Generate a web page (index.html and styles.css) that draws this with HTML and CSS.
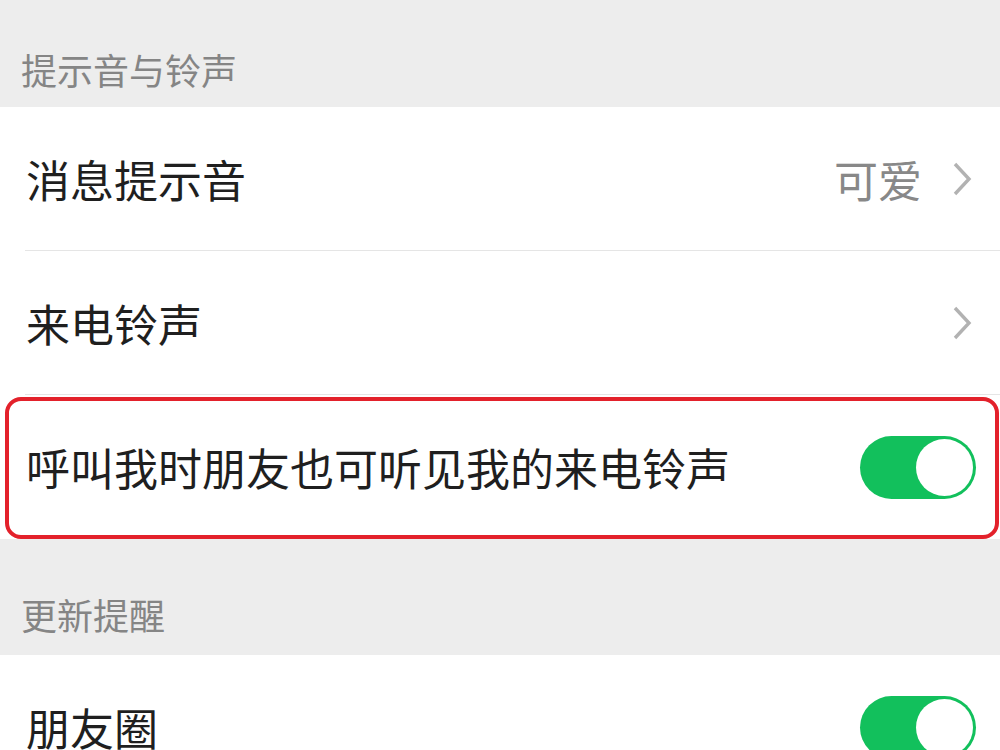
FILE: index.html
```html
<!DOCTYPE html>
<html lang="zh-CN">
<head>
    <meta charset="UTF-8">
    <meta name="viewport" content="width=device-width, initial-scale=1.0">
    <title>新消息通知</title>
    <link rel="stylesheet" href="styles.css">
</head>
<body>
    <div class="page">
        <div class="group-title first">提示音与铃声</div>
        <div class="group">
            <div class="cell">
                <span class="label">消息提示音</span>
                <span class="extra">
                    <span class="value">可爱</span>
                    <svg class="arrow" viewBox="0 0 20 34"><polyline points="3,2 17,17 3,32"/></svg>
                </span>
            </div>
            <div class="cell">
                <span class="label">来电铃声</span>
                <span class="extra">
                    <svg class="arrow" viewBox="0 0 20 34"><polyline points="3,2 17,17 3,32"/></svg>
                </span>
            </div>
            <div class="cell marked">
                <span class="label">呼叫我时朋友也可听见我的来电铃声</span>
                <span class="switch on"><span class="knob"></span></span>
            </div>
        </div>
        <div class="group-title">更新提醒</div>
        <div class="group">
            <div class="cell">
                <span class="label">朋友圈</span>
                <span class="switch on"><span class="knob"></span></span>
            </div>
        </div>
    </div>
</body>
</html>
```

FILE: styles.css
```css
* {
    margin: 0;
    padding: 0;
    box-sizing: border-box;
}

body {
    font-family: "Noto Sans CJK SC", "Noto Sans", sans-serif;
    background: #ededed;
    overflow: hidden;
}

.page {
    width: 1000px;
}

/* Group headers */
.group-title {
    height: 116px;
    display: flex;
    align-items: flex-end;
    padding: 0 0 16px 21px;
    font-size: 36px;
    line-height: 50px;
    color: #858585;
}

.group-title.first {
    height: 107px;
    padding-bottom: 13px;
}

.group {
    background: #fff;
}

/* Rows */
.cell {
    position: relative;
    height: 144px;
    display: flex;
    align-items: center;
    justify-content: space-between;
    padding: 0 24px 0 26px;
}

.cell + .cell::before {
    content: "";
    position: absolute;
    top: -1px;
    left: 25px;
    right: 0;
    height: 1px;
    background: #e5e5e5;
}

.label {
    font-size: 44px;
    color: #1f1f1f;
    white-space: nowrap;
}

.extra {
    display: flex;
    align-items: center;
    gap: 30px;
}

.value {
    font-size: 44px;
    color: #888;
}

.arrow {
    width: 20px;
    height: 34px;
    margin-right: 4px;
}

.arrow polyline {
    fill: none;
    stroke: #b2b2b2;
    stroke-width: 3.4;
}

/* Switch */
.switch {
    width: 116px;
    height: 63px;
    border-radius: 32px;
    background: #e5e5e5;
    display: flex;
    align-items: center;
    padding: 3px;
}

.switch.on {
    background: #12c05c;
    justify-content: flex-end;
}

.knob {
    width: 57px;
    height: 57px;
    border-radius: 50%;
    background: #fff;
}

/* Red annotation frame */
.cell.marked::after {
    content: "";
    position: absolute;
    left: 5px;
    top: 2px;
    right: 1px;
    bottom: 0;
    border: 4px solid #e3212b;
    border-radius: 16px;
}
```
